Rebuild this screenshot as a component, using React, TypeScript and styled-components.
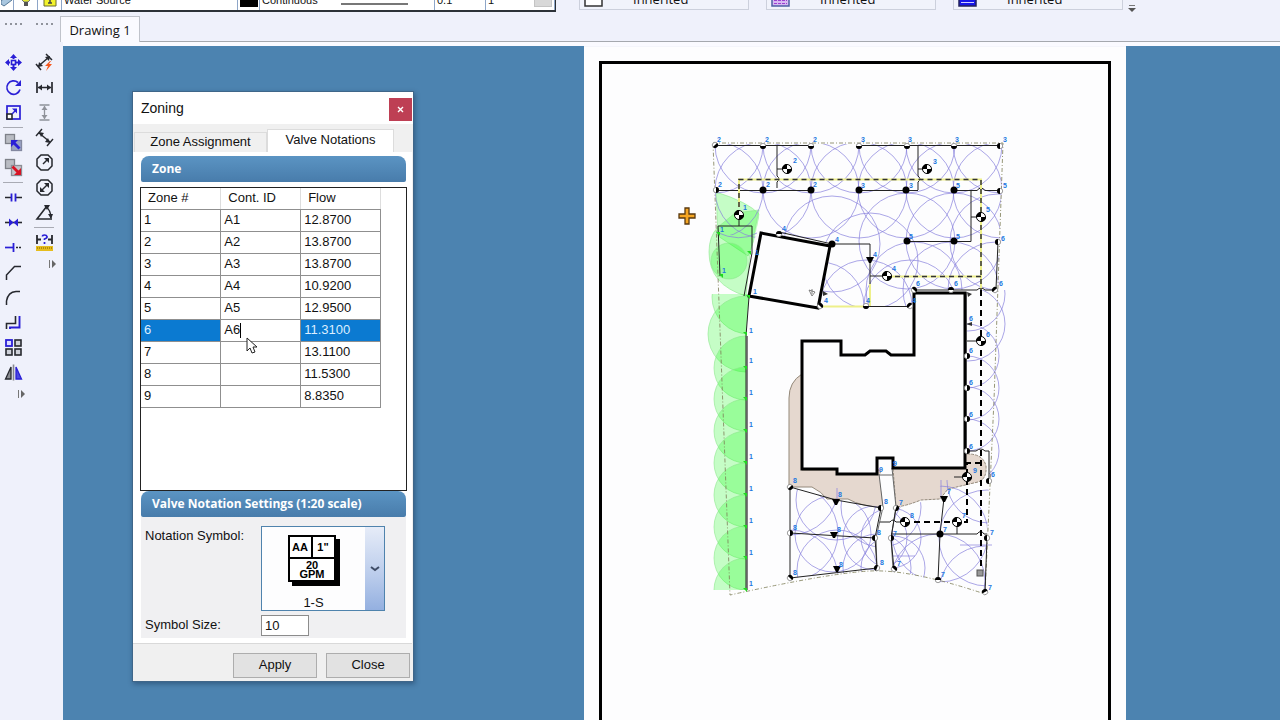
import React from "react";
import styled, { createGlobalStyle, css } from "styled-components";

const sans = `"Liberation Sans", Arial, sans-serif`;
const humanist = `"Open Sans", "Noto Sans", sans-serif`;

const GlobalStyle = createGlobalStyle`
  * { box-sizing: border-box; }
  body { margin: 0; font: 13px/16px ${sans}; color: #111; background: #eff1fb; }
  button, input { font: inherit; color: inherit; }
`;

/* ---------- application frame ---------- */

const Shell = styled.div`
  height: 100vh;
  display: flex;
  flex-direction: column;
  overflow: hidden;
  background: #eff1fb;
`;

const Ribbon = styled.header`
  height: 16px;
  flex: none;
  display: flex;
  align-items: flex-end;
  gap: 17px;
  overflow: hidden;
`;

const PropertyStrip = styled.div`
  display: flex;
  height: 24px;
  width: 556px;
  margin: 0 6px 4px 0;
  background: #fff;
  border-bottom: 2px solid #2d3238;
  border-right: 1px solid #2d3238;
  font-size: 11px;
  line-height: 14px;
`;

const StripCell = styled.div<{ $w: number }>`
  width: ${(p) => p.$w}px;
  display: flex;
  align-items: flex-end;
  gap: 3px;
  padding: 0 2px 3px;
  border-right: 1px solid #8ea6c8;
`;

const IconCell = styled(StripCell)`
  padding: 0 0 3px;
  justify-content: center;
`;

const Swatch = styled.span`
  width: 18px;
  height: 18px;
  background: #000;
`;

const LineSample = styled.span`
  width: 67px;
  margin: 0 0 2px 20px;
  border-bottom: 2px solid #777;
`;

const StripButton = styled.button`
  width: 18px;
  height: 18px;
  margin-left: auto;
  border: 1px solid #c4c4c4;
  background: #d8d8d8;
`;

const StyleCombo = styled.button`
  width: 170px;
  height: 26px;
  margin-bottom: 6px;
  padding: 0 4px 2px;
  display: flex;
  align-items: flex-end;
  gap: 30px;
  border: 1px solid #ccd0dc;
  background: #f1f3fb;
  font: 13px/16px ${humanist};
`;

const OverflowMark = styled.svg`
  margin: 0 0 3px -12px;
`;

const Workspace = styled.div`
  flex: 1;
  display: flex;
  min-height: 0;
`;

const Palettes = styled.nav`
  width: 60px;
  flex: none;
  display: flex;
  gap: 5px;
  padding: 6px 0 0 0;
`;

const Palette = styled.div`
  width: 26px;
  display: flex;
  flex-direction: column;
  align-items: center;
`;

const Grip = styled.span`
  width: 17px;
  height: 2px;
  margin: 1px 0 25px;
  background: repeating-linear-gradient(90deg, #90939c 0 2px, transparent 2px 5px);
`;

const ToolButton = styled.button`
  width: 25px;
  height: 25px;
  padding: 0;
  border: 0;
  background: none;
  display: grid;
  place-items: center;
`;

const Separator = styled.hr`
  width: 20px;
  height: 1px;
  margin: 2px 0;
  border: 0;
  background: #a9abb4;
`;

const More = styled.button`
  width: 10px;
  height: 12px;
  margin: 3px 0 0;
  padding: 0;
  border: 0;
  background: none;
  align-self: flex-end;
  display: grid;
  place-items: center;
`;

const Documents = styled.main`
  flex: 1;
  min-width: 0;
  display: flex;
  flex-direction: column;
`;

const TabBar = styled.div`
  display: flex;
  height: 26px;
  flex: none;

  &::after {
    content: "";
    flex: 1;
    border-bottom: 1px solid #a5a8ae;
  }
`;

const DocumentTab = styled.button`
  width: 80px;
  padding: 0;
  border: 1px solid #c0c3cb;
  border-bottom: 0;
  background: #fafaff;
  font: 13px/18px ${humanist};
`;

const Canvas = styled.div`
  flex: 1;
  min-height: 0;
  position: relative;
  margin-left: 3px;
  border-top: 4px solid #fafaff;
  background: #4c83b0;
`;

const Paper = styled.div`
  width: 542px;
  height: 100%;
  margin-left: 521px;
  padding: 14px 15px 0;
  background: #fdfdfe;
  border-top: 1px solid #f4f5fb;
`;

const Sheet = styled.div`
  height: 100%;
  border: 3px solid #000;
  border-bottom: 0;

  svg { display: block; width: 100%; }
`;

/* ---------- zoning window ---------- */

const Dialog = styled.section`
  position: absolute;
  left: 69px;
  top: 45px;
  width: 282px;
  background: #f0f0f0;
  border: 1px solid #3f6689;
  box-shadow: 1px 2px 5px rgba(0, 20, 50, 0.35);
`;

const TitleBar = styled.div`
  height: 32px;
  display: flex;
  align-items: center;
  justify-content: space-between;
  padding-left: 8px;
  background: #fff;
`;

const Title = styled.h1`
  margin: 0;
  font: 14px/18px ${sans};
`;

const CloseBox = styled.button`
  width: 23px;
  height: 23px;
  margin: 3px 1px 0 0;
  padding: 0;
  border: 0;
  background: #be3f54;
  display: grid;
  place-items: center;
`;

const Tabs = styled.div`
  display: flex;
  align-items: flex-end;
  height: 28px;
  padding: 0 1px;
`;

const Tab = styled.button<{ $active?: boolean }>`
  width: ${(p) => (p.$active ? 127 : 133)}px;
  height: ${(p) => (p.$active ? 23 : 20)}px;
  padding: 0 0 2px;
  border: 1px solid #dcdcdc;
  border-bottom: 0;
  background: ${(p) => (p.$active ? "#fff" : "#f0f0f0")};
`;

const TabPanel = styled.div`
  margin-right: 1px;
  padding: 4px 5px 5px 7px;
  background: #fff;
  border-bottom: 1px solid #d9d9d9;
`;

const SectionTitle = styled.h2`
  height: 26px;
  margin: 0 1px;
  padding-left: 11px;
  border-radius: 8px 8px 2px 2px;
  background: linear-gradient(#5b94c3, #487cab);
  color: #fff;
  font: bold 12px/26px ${humanist};
`;

const GridBox = styled.div`
  height: 304px;
  margin: 5px 0 0;
  border: 1px solid #222;
`;

const Grid = styled.table`
  width: 240px;
  table-layout: fixed;
  border-collapse: collapse;
`;

const HeadCell = styled.th`
  height: 21px;
  padding: 0 7px;
  border-right: 1px solid #ddd;
  border-bottom: 1px solid #8f8f8f;
  font-weight: normal;
  text-align: left;
`;

const Cell = styled.td<{ $selected?: boolean }>`
  height: 22px;
  padding: 0 3px;
  border: 1px solid #8f8f8f;
  border-left-width: 0;
  ${(p) =>
    p.$selected &&
    css`
      background: #0b7ad1;
      color: #dceeff;
    `}
`;

const CellEditor = styled.div`
  display: flex;
  align-items: center;

  input {
    width: 16px;
    padding: 0;
    border: 0;
    outline: 0;
    background: none;
  }
`;

const Caret = styled.span`
  width: 1px;
  height: 15px;
  background: #000;
`;

const Settings = styled.div`
  display: grid;
  grid-template-columns: 116px auto;
  justify-content: start;
  row-gap: 4px;
  margin: 0 1px;
  padding: 9px 4px 2px;
  background: #f0f0f2;
`;

const Label = styled.label`
  padding-top: 2px;
`;

const SymbolPicker = styled.button`
  width: 124px;
  height: 85px;
  padding: 0;
  display: flex;
  border: 1px solid #4f83ad;
  background: #fdfdfe;
`;

const SymbolPreview = styled.span`
  flex: 1;
  height: 100%;
  display: flex;
  flex-direction: column;
  align-items: center;
  justify-content: space-between;
  padding-top: 7px;
  line-height: 14px;
`;

const DropStrip = styled.span`
  width: 19px;
  height: 100%;
  display: grid;
  place-items: center;
  background: linear-gradient(#e6ecf8, #b9cbeb 60%, #94b0e0);
`;

const SizeInput = styled.input`
  width: 48px;
  height: 21px;
  padding: 0 3px;
  border: 1px solid #8c8c8c;
  background: #fff;
`;

const Footer = styled.div`
  display: flex;
  justify-content: flex-end;
  gap: 9px;
  padding: 9px 3px 3px;
`;

const PushButton = styled.button`
  width: 84px;
  height: 25px;
  padding: 0 0 2px;
  border: 1px solid #adadad;
  background: #e2e2e2;
`;

const Pointer = styled.svg`
  position: absolute;
  left: 113px;
  top: 245px;
`;

/* ---------- tool icons ---------- */

const BLUE = "#2a1fd6";
const INK = "#26282e";

const Icon = ({ children }: { children: React.ReactNode }) => (
  <svg width="19" height="19" viewBox="0 0 19 19" fill="none" stroke={INK} strokeWidth="1.3">
    {children}
  </svg>
);

const blueFill = { fill: BLUE, stroke: "none" };

const editTools: [string, React.ReactNode][] = [
  ["Move", <><path d="M9.5 1l3.500 4h-7zM9.5 18l3.500-4h-7zM1 9.500l4-3.500v7zM18 9.500l-4-3.500v7z" {...blueFill} /><rect x="7.500" y="7.500" width="4" height="4" stroke={BLUE} strokeWidth="1.600" /><path d="M9.500 4v3M9.500 12v3M4 9.500h3M12 9.500h3" stroke={BLUE} strokeWidth="2" strokeDasharray="2 1" /></>],
  ["Rotate", <><path d="M14 4.500A6.700 6.700 0 1 0 16 11.500" stroke={BLUE} strokeWidth="1.700" /><path d="M17 2v6h-6z" {...blueFill} /></>],
  ["Scale", <><rect x="3" y="3" width="13" height="13" stroke={BLUE} strokeWidth="1.700" /><rect x="3" y="11" width="5" height="5" fill="#fff" strokeWidth="1.600" /><path d="M8 11l4-4" stroke={BLUE} strokeWidth="1.500" /><path d="M13 5.500v5l-5-5z" {...blueFill} /></>],
  ["-", null],
  ["Bring forward", <><rect x="1.500" y="1.500" width="9" height="9" fill="#b9bcc3" stroke="#7e8189" /><rect x="7.500" y="7.500" width="10" height="10" fill="#9ba3c4" stroke="#8388a0" /><path d="M7 7h7l-2.500 2.500 5 5-2 2-5-5L7 14z" {...blueFill} /></>],
  ["Send back", <><rect x="1.500" y="1.500" width="9" height="9" fill="#b9bcc3" stroke="#7e8189" /><rect x="7.500" y="7.500" width="10" height="10" fill="#c4c4ca" stroke="#8b8d95" /><path d="M17 17h-7l2.500-2.500-5-5 2-2 5 5L17 10z" fill="#d81424" stroke="none" /></>],
  ["-", null],
  ["Break", <><path d="M1 9.500h6M12 9.500h6" strokeWidth="1.700" /><path d="M7.500 5.500v8M11.500 5.500v8" stroke={BLUE} strokeWidth="1.800" /></>],
  ["Join", <><path d="M1 9.500h17" strokeWidth="1.600" /><path d="M5 5.500l4.500 4-4.500 4zM14 5.500l-4.500 4 4.500 4z" {...blueFill} /></>],
  ["Trim", <><path d="M1 9.500h9" stroke={BLUE} strokeWidth="1.700" /><path d="M9.500 5v9" stroke={BLUE} strokeWidth="1.800" /><path d="M12 9.500h6" strokeWidth="1.700" strokeDasharray="2 1" /></>],
  ["Chamfer", <path d="M2.500 17v-5l8-8.500H17" strokeWidth="1.500" />],
  ["Fillet", <path d="M2.500 17v-4Q4 4 12 3.500h4" strokeWidth="1.500" />],
  ["Offset", <><path d="M2.500 16v-5.500h9V3" strokeWidth="1.600" /><path d="M6 16v-1.500h9.500V3" stroke={BLUE} strokeWidth="1.900" /></>],
  ["Array", <><rect x="2" y="2" width="6" height="6" fill="#dcdcff" stroke={BLUE} strokeWidth="1.800" /><rect x="11" y="2" width="6" height="6" fill="#cfd2da" strokeWidth="1.600" /><rect x="2" y="11" width="6" height="6" fill="#cfd2da" strokeWidth="1.600" /><rect x="11" y="11" width="6" height="6" fill="#cfd2da" strokeWidth="1.600" /></>],
  ["Mirror", <><path d="M7 4v12H1.500z" fill="#8b8d92" /><path d="M9.500 1.500v16" stroke="#85878f" strokeWidth="1.600" /><path d="M12 4v12h5.500z" fill="#4c49e0" stroke={BLUE} /></>],
];

const measureTools: [string, React.ReactNode][] = [
  ["Quick dimension", <><path d="M3 13.500L14 4M1 11l5 6M11 1l6 6" strokeWidth="1.500" /><path d="M3 14l1-5 4 4zM15 3l-5 1 4 4z" fill={INK} stroke="none" /><path d="M15 8l-5 5h3l-2 5 6-7h-3l2-3z" fill="#f4581e" stroke="none" /></>],
  ["Horizontal dimension", <><path d="M2 4v11M17 4v11M3 9.500h13" strokeWidth="1.700" /><path d="M3 9.500l4-3v6zM16 9.500l-4-3v6z" fill={INK} stroke="none" /></>],
  ["Vertical dimension", <g stroke="#8f929a"><path d="M4.500 2h10M4.500 17h10M9.500 3v13" /><path d="M9.500 3l3 4h-6zM9.500 16l3-4h-6z" fill="#8f929a" stroke="none" /></g>],
  ["Aligned dimension", <><path d="M4 5l11 9M1 8l6-7M12 18l6-7" strokeWidth="1.400" /><path d="M4 4l5 1-3 4zM15 15l-5-1 3-4z" fill={INK} stroke="none" /></>],
  ["Radius", <><path d="M6 2h7l4 4v7l-4 4H6l-4-4V6z" strokeWidth="1.500" /><path d="M8 11l4-4" strokeWidth="1.500" /><path d="M14 5v5l-5-5z" fill={INK} stroke="none" /></>],
  ["Diameter", <><path d="M6 2h7l4 4v7l-4 4H6l-4-4V6z" strokeWidth="1.500" /><path d="M6 13l7-7" strokeWidth="1.500" /><path d="M14 5v5l-5-5zM5 14V9l5 5z" fill={INK} stroke="none" /></>],
  ["Angle", <><path d="M17 16H2L12 3" strokeWidth="1.600" /><path d="M10 3q6 4 6 12" /><path d="M9 2h6l-3 5zM16 16l-3-5h5z" fill={INK} stroke="none" /></>],
  ["-", null],
  ["Measure", <><path d="M2 2v9M17 2v9M2 6.500h4M13 6.500h4" strokeWidth="1.800" /><path d="M7.500 3.500Q7.500 2 9.500 2T12 3.500 9.500 6v1M9.500 9v2" stroke={BLUE} strokeWidth="1.700" /><rect x="1" y="13" width="17" height="5" fill="#e6bd1c" stroke="none" /><path d="M2 15h15" stroke="#a07e06" strokeDasharray="1 1" /></>],
];

const ToolPalette = ({ name, tools }: { name: string; tools: [string, React.ReactNode][] }) => (
  <Palette role="toolbar" aria-label={name}>
    <Grip />
    {tools.map(([label, art], i) =>
      label === "-" ? (
        <Separator key={i} />
      ) : (
        <ToolButton key={i} aria-label={label}>
          <Icon>{art}</Icon>
        </ToolButton>
      )
    )}
    <More aria-label="More tools">
      <svg width="8" height="8" viewBox="0 0 8 8"><path d="M1.500 0v8" stroke="#777" /><path d="M4 0l4 4-4 4z" fill="#666" /></svg>
    </More>
  </Palette>
);

/* ---------- irrigation plan ---------- */

type Pt = [number, number];

const fullCircles: [number, number, number][] = [
  [715, 145, 48], [763, 145, 48], [811, 145, 48], [859, 145, 48], [907, 145, 48], [954, 145, 48], [1001, 145, 48],
  [715, 190, 48], [763, 190, 48], [811, 190, 48], [859, 190, 48], [906, 190, 48], [954, 190, 48], [1001, 190, 48],
  [907, 241, 48], [954, 241, 48], [998, 242, 48], [832, 244, 48], [870, 261, 48], [866, 306, 46],
  [914, 290, 48], [951, 290, 48], [996, 290, 48], [820, 306, 44], [910, 306, 46],
];

const lowerCircles: [number, number, number][] = [
  [790, 487, 48], [836, 500, 40], [881, 507, 40], [790, 533, 48], [833, 534, 38], [875, 538, 32],
  [790, 578, 48], [837, 570, 40], [877, 568, 34],
  [940, 534, 48], [891, 538, 30], [893, 568, 32], [938, 581, 47], [987, 538, 48], [985, 592, 46], [989, 481, 42],
];

const sideFans: [number, number, number][] = [
  [968, 294, 37], [968, 324, 37], [967, 356, 32], [967, 388, 32], [967, 419, 32], [967, 451, 32],
];

const greenFans: [number, number, number][] = [
  [746, 334, 38], [746, 368, 32], [746, 399, 32], [746, 431, 32], [746, 463, 32],
  [746, 495, 32], [746, 527, 32], [746, 558, 32], [746, 590, 32],
];

/* x, y, rotation of the dark half (null means a solid head) */
const heads: [number, number, number | null][] = [
  [715, 145, 45], [763, 146, 90], [811, 146, 90], [859, 146, 90], [907, 146, 90], [954, 146, 90], [1000, 146, 180],
  [716, 190, 0], [763, 190, null], [811, 190, null], [859, 190, null], [906, 190, null], [954, 190, null], [1000, 191, 180],
  [907, 241, null], [954, 241, null], [998, 242, 180],
  [832, 244, null], [779, 234, 270], [820, 306, 315], [866, 306, 90], [910, 306, 225],
  [914, 290, 315], [951, 290, 270], [995, 290, 225],
  [967, 356, 0], [967, 388, 0], [967, 419, 0], [967, 451, 0], [989, 481, 180],
  [790, 487, 45], [790, 533, 0], [790, 578, 315], [881, 508, 180], [875, 538, 180], [877, 568, 200],
  [896, 508, 20], [891, 538, 0], [894, 569, 315], [940, 534, null], [938, 580, 270], [987, 538, 180], [985, 592, 240],
];

const triangles: Pt[] = [[870, 260], [836, 502], [834, 535], [837, 569], [944, 499]];

const valves: Pt[] = [
  [787, 169], [927, 169], [739, 215], [981, 217], [887, 276], [981, 341], [967, 477], [905, 522], [957, 522],
];

const tags: [number, number, string][] = [
  [719, 142, "2"], [767, 142, "2"], [815, 142, "2"], [863, 142, "3"], [910, 142, "3"], [957, 142, "3"], [1005, 142, "3"],
  [720, 187, "2"], [768, 187, "2"], [815, 187, "2"], [863, 188, "3"], [911, 188, "3"], [958, 188, "5"], [1005, 188, "5"],
  [795, 163, "2"], [935, 164, "3"], [745, 210, "1"], [988, 212, "5"], [894, 271, "4"], [988, 337, "6"],
  [722, 232, "1"], [757, 255, "1"], [724, 273, "1"], [755, 294, "1"],
  [784, 231, "4"], [837, 242, "4"], [875, 257, "4"], [826, 303, "4"], [868, 303, "4"], [914, 303, "4"],
  [911, 239, "5"], [958, 239, "5"], [1003, 241, "6"], [918, 286, "6"], [956, 286, "6"], [1001, 286, "6"],
  [971, 321, "6"], [971, 353, "6"], [971, 385, "6"], [971, 417, "6"], [971, 449, "6"], [975, 473, "9"], [993, 477, "6"],
  [751, 333, "1"], [751, 363, "1"], [751, 395, "1"], [751, 427, "1"], [751, 459, "1"], [751, 491, "1"], [751, 523, "1"], [751, 555, "1"], [751, 586, "1"],
  [795, 483, "8"], [840, 497, "8"], [881, 472, "9"], [895, 466, "9"], [886, 504, "8"], [795, 530, "8"], [839, 532, "8"], [879, 535, "8"],
  [795, 575, "8"], [841, 567, "8"], [882, 565, "8"],
  [901, 505, "7"], [949, 494, "7"], [912, 518, "8"], [964, 518, "7"], [945, 532, "7"], [895, 536, "7"], [899, 566, "7"],
  [943, 577, "7"], [992, 535, "7"], [990, 590, "7"],
];

const Rings = ({ items }: { items: [number, number, number][] }) => (
  <>{items.map(([x, y, r], i) => <circle key={i} cx={x} cy={y} r={r} />)}</>
);

const Plan = () => (
  <svg viewBox="602 64 506 656" fill="none" role="img" aria-label="Irrigation plan">
    <defs>
      <clipPath id="upper"><path d="M714 144H1003L998 290H914V306H820L832 244 762 232 752 240 716 232Z" /></clipPath>
      <clipPath id="lower"><path d="M790 487L838 500 881 507 875 538 877 570 790 578ZM896 508L930 500 945 480 989 481 985 592 940 582 893 569 891 538Z" /></clipPath>
      <clipPath id="side"><path d="M967 290h45v184h-45z" /></clipPath>
      <clipPath id="strip"><path d="M705 294H749L746 336V590H705Z" /></clipPath>
      <clipPath id="corner"><path d="M716 190H765L752 250 748 297H705V215H716Z" /></clipPath>
    </defs>

    {/* lawn strip along the west side */}
    <g clipPath="url(#corner)" fill="#00ff00" fillOpacity="0.22" stroke="#8be88b" strokeWidth="0.600">
      <path d="M716 192Q748 202 759 214L757 233 748 256 718 236Z" />
      <path d="M718 227L735 213 759 210 752 245 750 253 746 296Q709 285 709 252Q709 236 718 227Z" />
      <circle cx="729" cy="261" r="18" />
    </g>
    <g clipPath="url(#strip)" fill="#00ff00" fillOpacity="0.220" stroke="#8be88b" strokeWidth="0.600">
      <circle cx="749" cy="297" r="37" />
      <Rings items={greenFans} />
    </g>

    {/* planting beds */}
    <path d="M802 374Q789 382 789 398V487L812 487Q822 492 827 499L848 499Q862 507 883 507L880 470H802Z" fill="#e5d8cf" stroke="#94897a" />
    <path d="M893 468H965V454Q983 453 986 466 987 479 978 482L948 489 940 499 921 500Q906 506 896 507Z" fill="#e5d8cf" stroke="#94897a" strokeDasharray="3 1" />

    {/* spray patterns */}
    <g stroke="#8780dc" strokeWidth="0.700">
      <g clipPath="url(#upper)"><Rings items={fullCircles} /></g>
      <g clipPath="url(#lower)"><Rings items={lowerCircles} /></g>
      <g clipPath="url(#side)"><Rings items={sideFans} /></g>
      <path d="M716 232Q740 243 757 233M837 488V500M941 480V498M886 556H915M960 545H992" />
    </g>

    {/* property line */}
    <path d="M713 143H1003L994 400 985 594Q910 569 870 571T730 595Z" stroke="#7c7c55" strokeWidth="0.800" strokeDasharray="4 2 1 2" />

    {/* walk */}
    <path d="M879 474L883 507 876 538 878 569H893L891 538 896 507 892 468Z" fill="#fdfdfe" />
    <path d="M879 474L883 507 876 538 877 569M892 468L896 507 891 538 893 569M879 475h13" stroke="#666" />

    {/* lateral pipes */}
    <g stroke="#222" strokeWidth="1">
      <path d="M715 145.500H811M859 145.500H1001M777 145V176q4 3 0 6V188M777 169H783M918 145V176q4 3 0 6V190M918 169H924" />
      <path d="M716 190.500H811M859 190.500H918M954 190.500H977q4-5 8 0H1000M971 190V241.500H907M971 217H977" />
      <path d="M718 226H752V253L744 296M718 226L720 276M739 219V226M749 297L746 336V590" />
      <path d="M779 232L832 244H870V306M820 306.500H910M870 276H883M998 242L996 289M914 290H977q4-4 8 0H996M966 292V452" />
      <path d="M967 451H976q5-4 9 0H989V481M967 341H977M954 477H963" />
      <path d="M790 487V578L877 568M790 487L836 500 881 508M790 533L875 538M881 508L875 538 877 568" />
      <path d="M896 508L891 538 894 569M891 534H977q4-5 7 0H987M944 498L940 534 938 580M987 538L985 592M880 522H890q3-4 6 0H902M957 522V534" />
      <path d="M747 336V590" stroke="#555" strokeWidth="1.500" />
    </g>

    {/* main line */}
    <path d="M739 207V179.500H981V290M981 276.500H890M820 306.500H868M870 284V306" stroke="#eef08a" strokeWidth="2" />
    <path d="M739 207V179.500H981V290M981 276.500H890" stroke="#333" strokeWidth="1.500" strokeDasharray="5 4" />
    <path d="M981 290V574M981 463H967V522H905" stroke="#000" strokeWidth="2" strokeDasharray="6 4" />
    <rect x="977" y="570" width="6" height="6" fill="#999" stroke="#555" strokeWidth="1" />

    {/* buildings */}
    <path d="M761 233L830 246 818 308 749 296Z" fill="#fdfdfe" stroke="#000" strokeWidth="3" />
    <path d="M802 341H841V355H865L870 351H886L891 355H914V293H965V468H893V458H877V474H837V469H802Z" fill="#fdfdfe" stroke="#000" strokeWidth="3" />
    <path d="M809 290l6 2-3 4zM812 289v5" stroke="#666" strokeWidth="0.800" />
    <path d="M823 291l5 3-5 2zM967 292l5 2-4 3zM966 324l6-2v4z" fill="#333" />

    {/* sprinkler heads */}
    {heads.map(([x, y, turn], i) =>
      turn === null ? (
        <circle key={i} cx={x} cy={y} r="3.500" fill="#000" />
      ) : (
        <g key={i} transform={`translate(${x} ${y}) rotate(${turn})`}>
          <circle r="2.700" fill="#fff" stroke="#777" strokeWidth="0.700" />
          <path d="M0 -3A3 3 0 0 1 0 3Z" fill="#000" />
        </g>
      )
    )}
    {triangles.map(([x, y], i) => <path key={i} d={`M${x - 4} ${y - 3}h8l-3 6h-2z`} fill="#000" />)}
    {[[719, 234], [750, 253], [722, 276], [749, 297], ...greenFans].map(([x, y], i) => (
      <path key={i} d={`M${x - 3} ${y - 2}h4v4z`} fill="#20d820" />
    ))}
    {valves.map(([x, y], i) => (
      <g key={i} transform={`translate(${x} ${y})`}>
        <circle r="4.500" fill="#fff" stroke="#000" />
        <path d="M0 0V-5A5 5 0 0 0 -5 0ZM0 0V5A5 5 0 0 0 5 0Z" fill="#000" />
      </g>
    ))}

    <g fill="#2377e0" fontFamily="Liberation Sans, Arial, sans-serif" fontSize="7" fontWeight="bold" textAnchor="middle">
      {tags.map(([x, y, t], i) => <text key={i} x={x} y={y}>{t}</text>)}
    </g>

    {/* placement cross */}
    <path d="M685 208h4v6h6v4h-6v6h-4v-6h-6v-4h6z" fill="#f5a623" stroke="#5a3a10" strokeWidth="1.300" />
  </svg>
);

/* ---------- zoning data ---------- */

const zones = [
  { id: 1, controller: "A1", flow: "12.8700" },
  { id: 2, controller: "A2", flow: "13.8700" },
  { id: 3, controller: "A3", flow: "13.8700" },
  { id: 4, controller: "A4", flow: "10.9200" },
  { id: 5, controller: "A5", flow: "12.9500" },
  { id: 6, controller: "A6", flow: "11.3100" },
  { id: 7, controller: "", flow: "13.1100" },
  { id: 8, controller: "", flow: "11.5300" },
  { id: 9, controller: "", flow: "8.8350" },
];
const editingZone = 6;

const NotationSymbol = () => (
  <svg width="54" height="54" viewBox="0 0 54 54" fontFamily="Liberation Sans, Arial, sans-serif" fontWeight="bold" textAnchor="middle">
    <path d="M5 5h48v47H5z" fill="#000" />
    <path d="M2 2h46v45H2z" fill="#fff" stroke="#000" strokeWidth="2" />
    <path d="M2 24h46M25 2v22" stroke="#000" strokeWidth="2" />
    <text x="13" y="17" fontSize="11">AA</text>
    <text x="36" y="17" fontSize="11">1"</text>
    <text x="25" y="35" fontSize="11">20</text>
    <text x="25" y="44" fontSize="11">GPM</text>
  </svg>
);

const ZoningDialog = () => (
  <Dialog role="dialog" aria-labelledby="zoning-title">
    <TitleBar>
      <Title id="zoning-title">Zoning</Title>
      <CloseBox aria-label="Close window">
        <svg width="7" height="7" viewBox="0 0 7 7"><path d="M1 1l5 5M6 1L1 6" stroke="#fff" strokeWidth="1.400" /></svg>
      </CloseBox>
    </TitleBar>
    <Tabs role="tablist">
      <Tab role="tab">Zone Assignment</Tab>
      <Tab role="tab" aria-selected $active>Valve Notations</Tab>
    </Tabs>
    <TabPanel role="tabpanel">
      <SectionTitle>Zone</SectionTitle>
      <GridBox>
        <Grid>
          <thead>
            <tr><HeadCell>Zone #</HeadCell><HeadCell>Cont. ID</HeadCell><HeadCell>Flow</HeadCell></tr>
          </thead>
          <tbody>
            {zones.map((z) => {
              const editing = z.id === editingZone;
              return (
                <tr key={z.id}>
                  <Cell $selected={editing}>{z.id}</Cell>
                  <Cell>
                    {editing ? (
                      <CellEditor>
                        <input aria-label="Controller ID" defaultValue={z.controller} />
                        <Caret />
                      </CellEditor>
                    ) : (
                      z.controller
                    )}
                  </Cell>
                  <Cell $selected={editing}>{z.flow}</Cell>
                </tr>
              );
            })}
          </tbody>
        </Grid>
      </GridBox>
      <SectionTitle>Valve Notation Settings (1:20 scale)</SectionTitle>
      <Settings>
        <Label htmlFor="symbol">Notation Symbol:</Label>
        <SymbolPicker id="symbol" aria-haspopup="listbox">
          <SymbolPreview><NotationSymbol />1-S</SymbolPreview>
          <DropStrip>
            <svg width="10" height="6" viewBox="0 0 10 6" fill="none"><path d="M1 1l4 3 4-3" stroke="#3e4c66" strokeWidth="2" /></svg>
          </DropStrip>
        </SymbolPicker>
        <Label htmlFor="size">Symbol Size:</Label>
        <SizeInput id="size" defaultValue="10" />
      </Settings>
    </TabPanel>
    <Footer>
      <PushButton>Apply</PushButton>
      <PushButton>Close</PushButton>
    </Footer>
    <Pointer width="12" height="18" viewBox="0 0 12 18">
      <path d="M1 1v13l3-3 2 5 3-1-2-5h4z" fill="#fff" stroke="#222" />
    </Pointer>
  </Dialog>
);

export default function App() {
  return (
    <Shell>
      <GlobalStyle />
      <Ribbon>
        <PropertyStrip>
          <IconCell $w={14}>
            <svg width="12" height="16" viewBox="0 0 12 16"><path d="M0 10l6-5 5 4-8 6-3-2z" fill="#a9c7df" stroke="#547795" /></svg>
          </IconCell>
          <IconCell $w={24}>
            <svg width="12" height="18" viewBox="0 0 12 18"><path d="M2 2h8v9l-2 2H4l-2-2z" fill="#e3e834" stroke="#777" /><path d="M4 13h4v4H4z" fill="#555" /></svg>
          </IconCell>
          <IconCell $w={24}>
            <svg width="14" height="20" viewBox="0 0 14 20"><path d="M1 1h12v18H1z" fill="#f3f32a" stroke="#6b6b30" /><path d="M7 8v8M5 16h4" stroke="#444" strokeWidth="1.500" /></svg>
          </IconCell>
          <StripCell $w={176}>Water Source</StripCell>
          <IconCell $w={22}><Swatch /></IconCell>
          <StripCell $w={175}>Continuous<LineSample /></StripCell>
          <StripCell $w={51}>0.1</StripCell>
          <StripCell $w={69}>1<StripButton aria-label="Open line weights" /></StripCell>
        </PropertyStrip>
        <StyleCombo>
          <svg width="19" height="18" viewBox="0 0 19 18"><path d="M1 0h17v17H1z" fill="#fff" stroke="#333" strokeWidth="1.500" /></svg>
          Inherited
        </StyleCombo>
        <StyleCombo>
          <svg width="19" height="18" viewBox="0 0 19 18"><path d="M1 0h17v17H1z" fill="#d6b8f2" stroke="#4d5fa5" strokeWidth="1.500" /><path d="M3 11.500h13M3 14.500h13" stroke="#9b3fd0" strokeDasharray="3 1" /></svg>
          Inherited
        </StyleCombo>
        <StyleCombo>
          <svg width="19" height="18" viewBox="0 0 19 18"><path d="M1 0h17v17H1z" fill="#1717e8" stroke="#23235c" strokeWidth="1.500" /><path d="M3 13.500h13" stroke="#cfcfff" /></svg>
          Inherited
        </StyleCombo>
        <OverflowMark width="8" height="9" viewBox="0 0 8 9"><path d="M1 1.500h6" stroke="#777" /><path d="M0 4h8L4 8z" fill="#555" /></OverflowMark>
      </Ribbon>
      <Workspace>
        <Palettes aria-label="Tools">
          <ToolPalette name="Edit" tools={editTools} />
          <ToolPalette name="Measure" tools={measureTools} />
        </Palettes>
        <Documents>
          <TabBar><DocumentTab>Drawing 1</DocumentTab></TabBar>
          <Canvas>
            <Paper><Sheet><Plan /></Sheet></Paper>
            <ZoningDialog />
          </Canvas>
        </Documents>
      </Workspace>
    </Shell>
  );
}
